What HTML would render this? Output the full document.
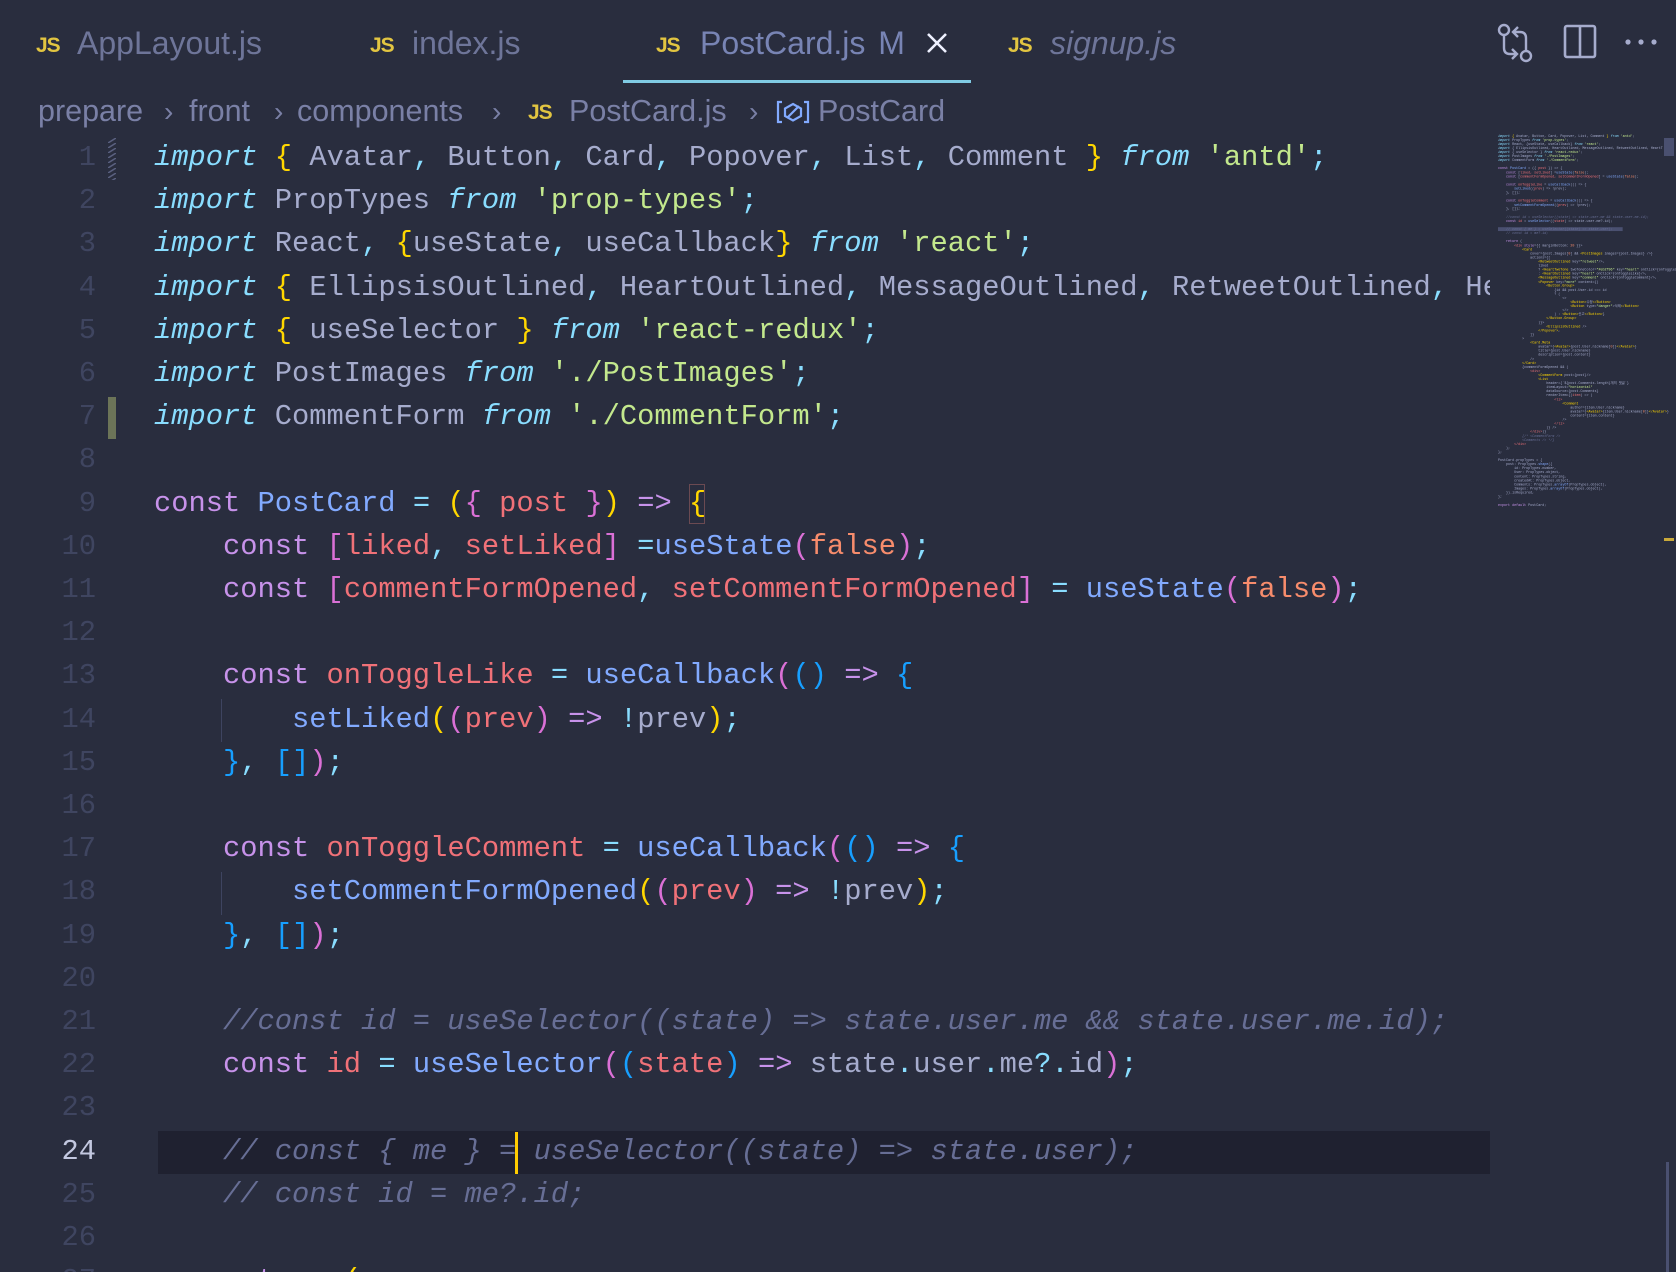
<!DOCTYPE html>
<html><head><meta charset="utf-8">
<style>
*{margin:0;padding:0;box-sizing:border-box}
html,body{width:1676px;height:1272px;overflow:hidden;background:#292d3e}
body{position:relative;font-family:"Liberation Sans",sans-serif}
.tab{position:absolute;top:25px;font-size:32px;color:#6e7599;white-space:nowrap}
.js{position:absolute;top:32px;font-family:"Liberation Sans",sans-serif;font-weight:bold;font-size:21px;color:#e2c541;letter-spacing:-1px}
.bc{position:absolute;top:94px;font-size:30.5px;color:#7a80a6;white-space:nowrap}
.ch{position:absolute;top:96px;font-size:28px;color:#7a80a6}
.ln{position:absolute;left:0;width:96px;text-align:right;font-family:"Liberation Mono",monospace;font-size:28.75px;line-height:43.2px;color:#3f4560}
.cl{position:absolute;left:154px;font-family:"Liberation Mono",monospace;font-size:28.75px;line-height:43.2px;color:#a6accd;white-space:pre}
.k{color:#89ddff;font-style:italic}
.s{color:#c3e88d}
.c{color:#c792ea}
.f{color:#82aaff}
.v{color:#f07178}
.p{color:#89ddff}
.y{color:#ffd700}
.m{color:#da70d6}
.b{color:#179fff}
.o{color:#f78c6c}
.cm{color:#676e95;font-style:italic}
#mini{position:absolute;left:1498px;top:134px;font-family:"Liberation Mono",monospace;font-size:28.75px;line-height:34.8px;color:#a6accd;white-space:pre;transform:scale(0.1165);transform-origin:0 0}
</style></head><body>

<!-- tabs -->
<div class="js" style="left:36px;top:34px">JS</div><div class="tab" style="left:77px">AppLayout.js</div>
<div class="js" style="left:370px;top:34px">JS</div><div class="tab" style="left:412px">index.js</div>
<div class="js" style="left:656px;top:34px">JS</div><div class="tab" style="left:700px;color:#7884b4">PostCard.js <span style="margin-left:4px">M</span></div>
<svg style="position:absolute;left:925px;top:31px" width="24" height="24" viewBox="0 0 24 24"><path d="M3 3L21 21M21 3L3 21" stroke="#eef0ff" stroke-width="2.6"/></svg>
<div style="position:absolute;left:623px;top:80px;width:348px;height:3px;background:#80cbe4"></div>
<div class="js" style="left:1008px;top:34px">JS</div><div class="tab" style="left:1050px;font-style:italic">signup.js</div>

<!-- top right icons -->
<svg style="position:absolute;left:1496px;top:22px" width="40" height="42" viewBox="0 0 40 42" fill="none" stroke="#a6accd" stroke-width="2.4">
<circle cx="8" cy="8" r="5"/><circle cx="30" cy="34" r="5"/>
<path d="M8 13V26Q8 32 14 32H20M16 27L21 32L16 37"/>
<path d="M30 29V16Q30 10 24 10H18M22 5L17 10L22 15"/>
</svg>
<svg style="position:absolute;left:1563px;top:24px" width="34" height="36" viewBox="0 0 34 36" fill="none" stroke="#a6accd" stroke-width="2.6"><rect x="2" y="2" width="30" height="31" rx="2"/><path d="M17 2V33"/></svg>
<svg style="position:absolute;left:1624px;top:38px" width="34" height="8"><circle cx="4" cy="4" r="2.6" fill="#a6accd"/><circle cx="17" cy="4" r="2.6" fill="#a6accd"/><circle cx="30" cy="4" r="2.6" fill="#a6accd"/></svg>

<!-- breadcrumb -->
<div class="bc" style="left:38px">prepare</div>
<div class="ch" style="left:164px">›</div>
<div class="bc" style="left:189px">front</div>
<div class="ch" style="left:274px">›</div>
<div class="bc" style="left:297px">components</div>
<div class="ch" style="left:492px">›</div>
<div class="js" style="left:528px;top:101px">JS</div>
<div class="bc" style="left:569px">PostCard.js</div>
<div class="ch" style="left:749px">›</div>
<svg style="position:absolute;left:776px;top:100px" width="34" height="24" viewBox="0 0 34 24" fill="none" stroke="#82aaff" stroke-width="2.2"><path d="M6 2H2V22H6M28 2H32V22H28"/><path d="M17 4L25 8.5V16L17 20.5L9 16V8.5Z"/><path d="M11 18L23 6"/></svg>
<div class="bc" style="left:818px">PostCard</div>

<!-- line highlight -->
<div style="position:absolute;left:158px;top:1131px;width:1332px;height:43px;background:#1f2130"></div>
<!-- gutter decorations -->
<svg style="position:absolute;left:108px;top:138px" width="8" height="42"><defs><pattern id="st" width="8" height="5" patternUnits="userSpaceOnUse"><path d="M0 5L8 0" stroke="#5a6080" stroke-width="1.5"/></pattern></defs><rect width="8" height="42" fill="url(#st)"/></svg>
<div style="position:absolute;left:108px;top:397px;width:8px;height:42px;background:#6c7458"></div>
<!-- indent guides -->
<div style="position:absolute;left:221px;top:699px;width:1px;height:43px;background:#3e4460"></div>
<div style="position:absolute;left:221px;top:872px;width:1px;height:43px;background:#3e4460"></div>
<!-- bracket box -->
<div style="position:absolute;left:689px;top:484px;width:16px;height:40px;border:1.5px solid #6b4a52"></div>
<!-- cursor -->
<div style="position:absolute;left:515px;top:1132px;width:3px;height:42px;background:#ffcc00"></div>

<!-- line numbers -->
<div class="ln" style="top:136px">1</div>
<div class="ln" style="top:179px">2</div>
<div class="ln" style="top:222px">3</div>
<div class="ln" style="top:266px">4</div>
<div class="ln" style="top:309px">5</div>
<div class="ln" style="top:352px">6</div>
<div class="ln" style="top:395px">7</div>
<div class="ln" style="top:438px">8</div>
<div class="ln" style="top:482px">9</div>
<div class="ln" style="top:525px">10</div>
<div class="ln" style="top:568px">11</div>
<div class="ln" style="top:611px">12</div>
<div class="ln" style="top:654px">13</div>
<div class="ln" style="top:698px">14</div>
<div class="ln" style="top:741px">15</div>
<div class="ln" style="top:784px">16</div>
<div class="ln" style="top:827px">17</div>
<div class="ln" style="top:870px">18</div>
<div class="ln" style="top:914px">19</div>
<div class="ln" style="top:957px">20</div>
<div class="ln" style="top:1000px">21</div>
<div class="ln" style="top:1043px">22</div>
<div class="ln" style="top:1086px">23</div>
<div class="ln" style="top:1130px;color:#c3c8e0">24</div>
<div class="ln" style="top:1173px">25</div>
<div class="ln" style="top:1216px">26</div>
<div class="ln" style="top:1259px">27</div>

<!-- code -->
<div class="cl" style="top:136px"><span class="k">import</span> <span class="y">{</span> Avatar<span class="p">,</span> Button<span class="p">,</span> Card<span class="p">,</span> Popover<span class="p">,</span> List<span class="p">,</span> Comment <span class="y">}</span> <span class="k">from</span> <span class="s">'antd'</span><span class="p">;</span></div>
<div class="cl" style="top:179px"><span class="k">import</span> PropTypes <span class="k">from</span> <span class="s">'prop-types'</span><span class="p">;</span></div>
<div class="cl" style="top:222px"><span class="k">import</span> React<span class="p">,</span> <span class="y">{</span>useState<span class="p">,</span> useCallback<span class="y">}</span> <span class="k">from</span> <span class="s">'react'</span><span class="p">;</span></div>
<div class="cl" style="top:266px;width:1336px;overflow:hidden"><span class="k">import</span> <span class="y">{</span> EllipsisOutlined<span class="p">,</span> HeartOutlined<span class="p">,</span> MessageOutlined<span class="p">,</span> RetweetOutlined<span class="p">,</span> HeartTwoTone <span class="y">}</span></div>
<div class="cl" style="top:309px"><span class="k">import</span> <span class="y">{</span> useSelector <span class="y">}</span> <span class="k">from</span> <span class="s">'react-redux'</span><span class="p">;</span></div>
<div class="cl" style="top:352px"><span class="k">import</span> PostImages <span class="k">from</span> <span class="s">'./PostImages'</span><span class="p">;</span></div>
<div class="cl" style="top:395px"><span class="k">import</span> CommentForm <span class="k">from</span> <span class="s">'./CommentForm'</span><span class="p">;</span></div>
<div class="cl" style="top:482px"><span class="c">const</span> <span class="f">PostCard</span> <span class="p">=</span> <span class="y">(</span><span class="m">{</span> <span class="v">post</span> <span class="m">}</span><span class="y">)</span> <span class="c">=&gt;</span> <span class="y">{</span></div>
<div class="cl" style="top:525px">    <span class="c">const</span> <span class="m">[</span><span class="v">liked</span><span class="p">,</span> <span class="v">setLiked</span><span class="m">]</span> <span class="p">=</span><span class="f">useState</span><span class="m">(</span><span class="o">false</span><span class="m">)</span><span class="p">;</span></div>
<div class="cl" style="top:568px">    <span class="c">const</span> <span class="m">[</span><span class="v">commentFormOpened</span><span class="p">,</span> <span class="v">setCommentFormOpened</span><span class="m">]</span> <span class="p">=</span> <span class="f">useState</span><span class="m">(</span><span class="o">false</span><span class="m">)</span><span class="p">;</span></div>
<div class="cl" style="top:654px">    <span class="c">const</span> <span class="v">onToggleLike</span> <span class="p">=</span> <span class="f">useCallback</span><span class="m">(</span><span class="b">()</span> <span class="c">=&gt;</span> <span class="b">{</span></div>
<div class="cl" style="top:698px">        <span class="f">setLiked</span><span class="y">(</span><span class="m">(</span><span class="v">prev</span><span class="m">)</span> <span class="c">=&gt;</span> <span class="p">!</span>prev<span class="y">)</span><span class="p">;</span></div>
<div class="cl" style="top:741px">    <span class="b">}</span><span class="p">,</span> <span class="b">[]</span><span class="m">)</span><span class="p">;</span></div>
<div class="cl" style="top:827px">    <span class="c">const</span> <span class="v">onToggleComment</span> <span class="p">=</span> <span class="f">useCallback</span><span class="m">(</span><span class="b">()</span> <span class="c">=&gt;</span> <span class="b">{</span></div>
<div class="cl" style="top:870px">        <span class="f">setCommentFormOpened</span><span class="y">(</span><span class="m">(</span><span class="v">prev</span><span class="m">)</span> <span class="c">=&gt;</span> <span class="p">!</span>prev<span class="y">)</span><span class="p">;</span></div>
<div class="cl" style="top:914px">    <span class="b">}</span><span class="p">,</span> <span class="b">[]</span><span class="m">)</span><span class="p">;</span></div>
<div class="cl" style="top:1000px">    <span class="cm">//const id = useSelector((state) =&gt; state.user.me &amp;&amp; state.user.me.id);</span></div>
<div class="cl" style="top:1043px">    <span class="c">const</span> <span class="v">id</span> <span class="p">=</span> <span class="f">useSelector</span><span class="m">(</span><span class="b">(</span><span class="v">state</span><span class="b">)</span> <span class="c">=&gt;</span> state<span class="p">.</span>user<span class="p">.</span>me<span class="p">?.</span>id<span class="m">)</span><span class="p">;</span></div>
<div class="cl" style="top:1130px">    <span class="cm">// const { me } = useSelector((state) =&gt; state.user);</span></div>
<div class="cl" style="top:1173px">    <span class="cm">// const id = me?.id;</span></div>
<div class="cl" style="top:1259px">    <span class="c">return</span> <span class="y">(</span></div>

<!-- minimap -->
<div id="mini"><span class="k">import</span> <span class="y">{</span> Avatar, Button, Card, Popover, List, Comment <span class="y">}</span> <span class="k">from</span> <span class="s">'antd'</span>;
<span class="k">import</span> PropTypes <span class="k">from</span> <span class="s">'prop-types'</span>;
<span class="k">import</span> React, {useState, useCallback} <span class="k">from</span> <span class="s">'react'</span>;
<span class="k">import</span> { EllipsisOutlined, HeartOutlined, MessageOutlined, RetweetOutlined, HeartT
<span class="k">import</span> { useSelector } <span class="k">from</span> <span class="s">'react-redux'</span>;
<span class="k">import</span> PostImages <span class="k">from</span> <span class="s">'./PostImages'</span>;
<span class="k">import</span> CommentForm <span class="k">from</span> <span class="s">'./CommentForm'</span>;

<span class="c">const</span> <span class="f">PostCard</span> = ({ <span class="v">post</span> }) =&gt; {
    <span class="c">const</span> [<span class="v">liked, setLiked</span>] =<span class="f">useState</span>(<span class="o">false</span>);
    <span class="c">const</span> [<span class="v">commentFormOpened, setCommentFormOpened</span>] = <span class="f">useState</span>(<span class="o">false</span>);

    <span class="c">const</span> <span class="v">onToggleLike</span> = <span class="f">useCallback</span>(() =&gt; {
        <span class="f">setLiked</span>((<span class="v">prev</span>) =&gt; !prev);
    }, []);

    <span class="c">const</span> <span class="v">onToggleComment</span> = <span class="f">useCallback</span>(() =&gt; {
        <span class="f">setCommentFormOpened</span>((<span class="v">prev</span>) =&gt; !prev);
    }, []);

    <span class="cm">//const id = useSelector((state) =&gt; state.user.me &amp;&amp; state.user.me.id);</span>
    <span class="c">const</span> <span class="v">id</span> = <span class="f">useSelector</span>((<span class="v">state</span>) =&gt; state.user.me?.id);

<span style="background:#4a5070">    <span class="cm">// const { me } = useSelector((state) =&gt; state.user);     </span></span>
    <span class="cm">// const id = me?.id;</span>

    <span class="c">return</span> (
        <span class="v">&lt;div</span> <span class="c">style</span>={{ marginBottom: <span class="o">20</span> }}&gt;
            <span class="y">&lt;Card</span>
                cover={post.Images[<span class="o">0</span>] &amp;&amp; <span class="y">&lt;PostImages</span> images={post.Images} /&gt;}
                actions={[
                    <span class="y">&lt;RetweetOutlined</span> key=<span class="s">"retweet"</span>/&gt;,
                    liked
                    ? <span class="y">&lt;HeartTwoTone</span> twoToneColor=<span class="s">"#eb2f96"</span> key=<span class="s">"heart"</span> onClick={onToggleLike}
                    : <span class="y">&lt;HeartOutlined</span> key=<span class="s">"heart"</span> onClick={onToggleLike}/&gt;,
                    <span class="y">&lt;MessageOutlined</span> key=<span class="s">"comment"</span> onClick={onToggleComment}/&gt;,
                    <span class="y">&lt;Popover</span> key=<span class="s">"more"</span> content={(
                        <span class="y">&lt;Button.Group&gt;</span>
                            {id &amp;&amp; post.User.id === id
                            ? (
                                &lt;&gt;
                                    <span class="y">&lt;Button&gt;</span>수정<span class="y">&lt;/Button&gt;</span>
                                    <span class="y">&lt;Button</span> type=<span class="s">"danger"</span>&gt;삭제<span class="y">&lt;/Button&gt;</span>
                                &lt;/&gt;
                            ) : <span class="y">&lt;Button&gt;</span>신고<span class="y">&lt;/Button&gt;</span>}
                        <span class="y">&lt;/Button.Group&gt;</span>
                    )}&gt;
                        <span class="y">&lt;EllipsisOutlined</span> /&gt;
                    <span class="y">&lt;/Popover&gt;</span>,
                ]}
            &gt;
                <span class="y">&lt;Card.Meta</span>
                    avatar={<span class="y">&lt;Avatar&gt;</span>{post.User.nickname[<span class="o">0</span>]}<span class="y">&lt;/Avatar&gt;</span>}
                    title={post.User.nickname}
                    description={post.content}
                /&gt;
            <span class="y">&lt;/Card&gt;</span>
            {commentFormOpened &amp;&amp; (
                <span class="v">&lt;div&gt;</span>
                    <span class="y">&lt;CommentForm</span> post={post}/&gt;
                    <span class="y">&lt;List</span>
                        header={`${post.Comments.length}개의 댓글`}
                        itemLayout=<span class="s">"horizontal"</span>
                        dataSource={post.Comments}
                        renderItem={(<span class="v">item</span>) =&gt; (
                            <span class="v">&lt;li&gt;</span>
                                <span class="y">&lt;Comment</span>
                                    author={item.User.nickname}
                                    avatar={<span class="y">&lt;Avatar&gt;</span>{item.User.nickname[<span class="o">0</span>]}<span class="y">&lt;/Avatar&gt;</span>}
                                    content={item.content}
                                /&gt;
                            <span class="v">&lt;/li&gt;</span>
                        )} /&gt;
                <span class="v">&lt;/div&gt;</span>)}
            <span class="cm">{/* &lt;CommentForm /&gt;</span>
            <span class="cm">&lt;Comments /&gt; */}</span>
        <span class="v">&lt;/div&gt;</span>
    );
};

PostCard.propTypes = {
    post: PropTypes.<span class="f">shape</span>({
        id: PropTypes.number,
        User: PropTypes.object,
        content: PropTypes.string,
        createdAt: PropTypes.object,
        Comments: PropTypes.<span class="f">arrayOf</span>(PropTypes.object),
        Images: PropTypes.<span class="f">arrayOf</span>(PropTypes.object),
    }).isRequired,
};

<span class="c">export default</span> PostCard;</div>

<!-- minimap scrollbar marks -->
<div style="position:absolute;left:1664px;top:138px;width:10px;height:18px;background:#4a5070"></div>
<div style="position:absolute;left:1664px;top:538px;width:10px;height:3px;background:#c9a93a"></div>
<div style="position:absolute;left:1666px;top:1162px;width:3px;height:110px;background:#4a5070"></div>
</body></html>
